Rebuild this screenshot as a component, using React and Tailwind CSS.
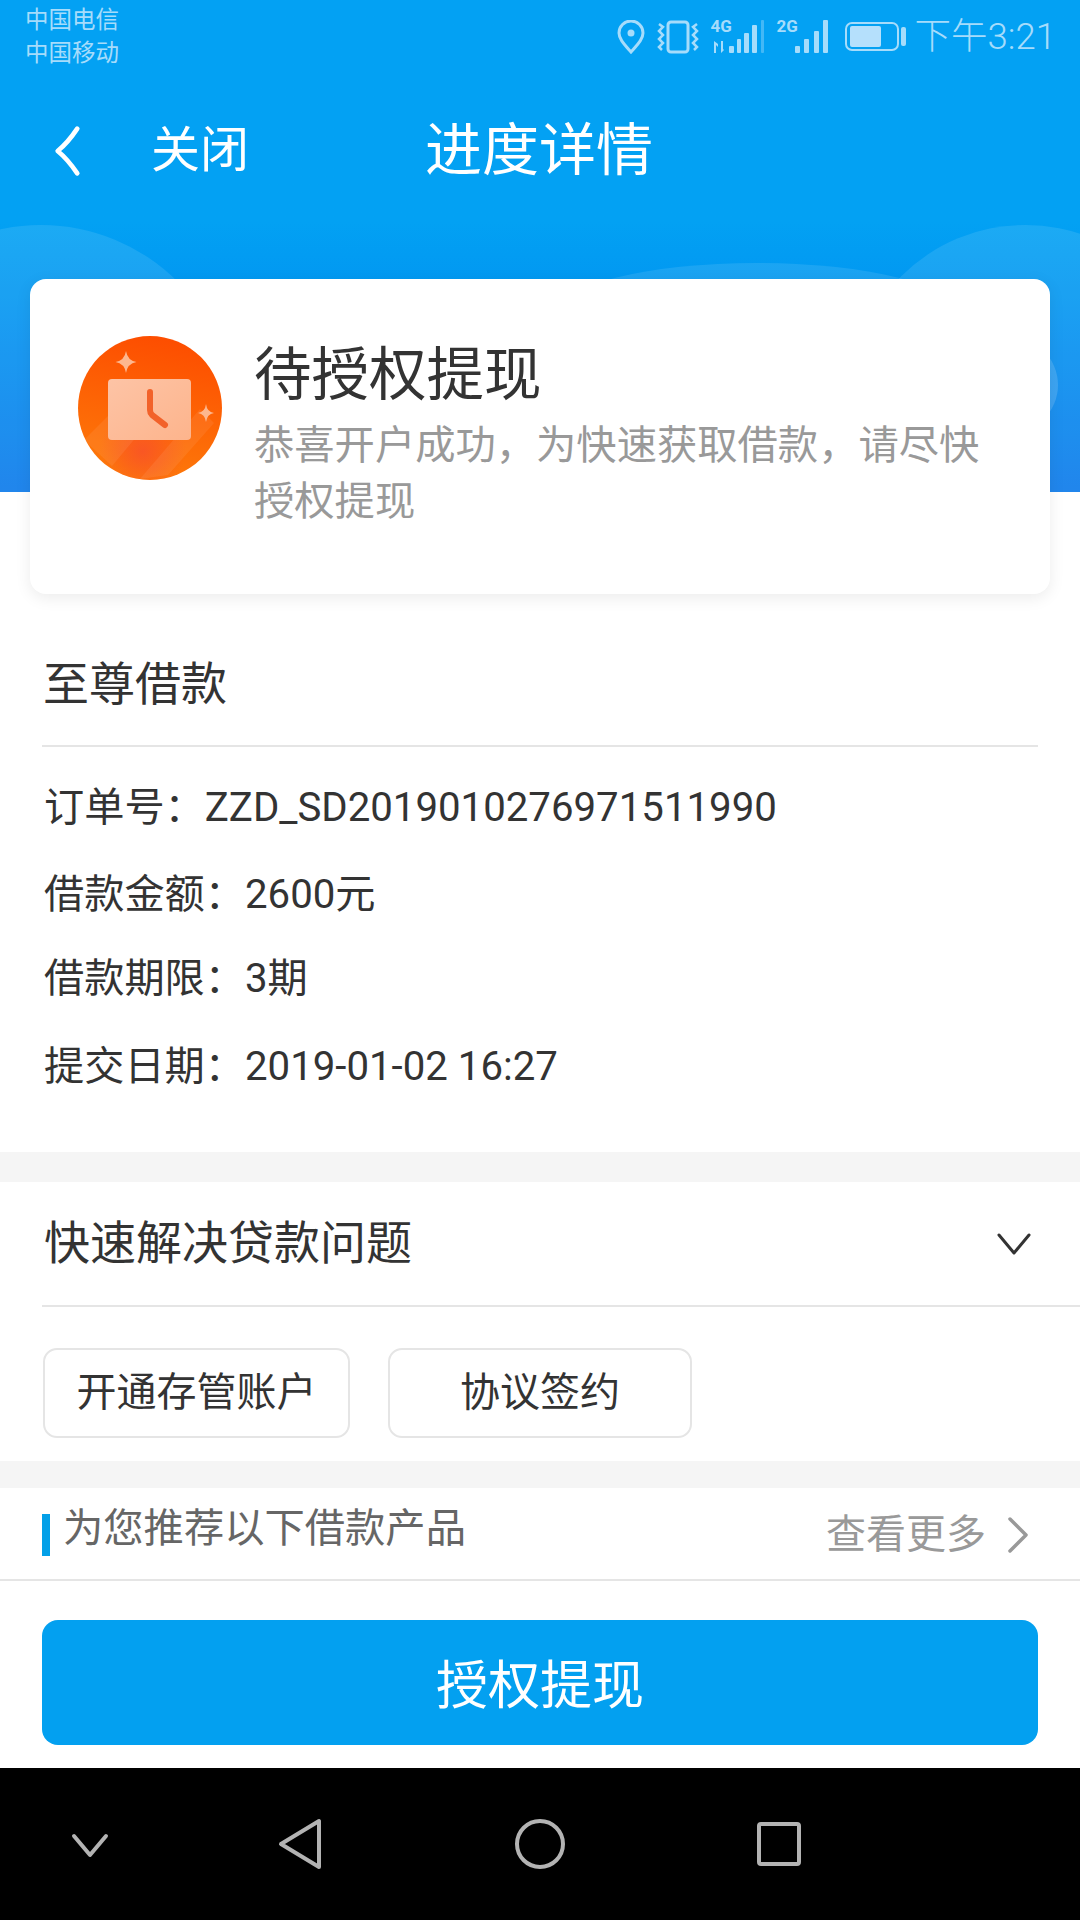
const statusBlue = '#a6dcfb'

function StatusIcons() {
  return (
    <div className="flex items-center">
      {/* location */}
      <svg width="28" height="34" viewBox="0 0 28 34" fill="none" stroke={statusBlue} strokeWidth="3">
        <path d="M14 32C7 24 2 19 2 13a12 12 0 0 1 24 0c0 6-5 11-12 19z" />
        <circle cx="14" cy="13" r="3.5" fill={statusBlue} stroke="none" />
      </svg>
      {/* vibrate */}
      <svg width="42" height="34" viewBox="0 0 42 34" fill="none" stroke={statusBlue} className="ml-[12px]">
        <rect x="11" y="2" width="20" height="30" rx="3" strokeWidth="3" />
        <path d="M2 4l4 3-4 4 4 4-4 4 4 4-4 4 3 3" strokeWidth="2.5" />
        <path d="M40 4l-4 3 4 4-4 4 4 4-4 4 4 4-3 3" strokeWidth="2.5" />
      </svg>
      {/* 4G signal */}
      <div className="relative w-[53px] h-[34px] ml-[12px]">
        <span className="absolute left-0 top-[-4px] text-[17px] leading-[20px] font-bold text-[#a6dcfb]">4G</span>
        <svg width="53" height="34" viewBox="0 0 53 34" fill={statusBlue}>
          <path d="M3 21v12h2V25l2 2v-3zM10 21v12l3-3-1-1v-8z" />
          <rect x="18" y="26" width="5" height="7" rx="1" />
          <rect x="26" y="19" width="4" height="14" rx="1" />
          <rect x="33" y="13" width="5" height="20" rx="1" />
          <rect x="41" y="5" width="5" height="28" rx="1" />
          <rect x="50" y="0" width="3" height="33" rx="1" opacity="0.4" />
        </svg>
      </div>
      {/* 2G signal */}
      <div className="relative w-[52px] h-[34px] ml-[13px]">
        <span className="absolute left-0 top-[-4px] text-[17px] leading-[20px] font-bold text-[#a6dcfb]">2G</span>
        <svg width="52" height="34" viewBox="0 0 52 34" fill={statusBlue}>
          <rect x="18" y="26" width="5" height="7" rx="1" />
          <rect x="27" y="19" width="5" height="14" rx="1" />
          <rect x="37" y="11" width="5" height="22" rx="1" />
          <rect x="46" y="0" width="5" height="33" rx="1" />
        </svg>
      </div>
      {/* battery */}
      <svg width="61" height="30" viewBox="0 0 61 30" fill="none" className="ml-[16px]">
        <rect x="1" y="1" width="52" height="27" rx="6" stroke={statusBlue} strokeWidth="2" />
        <rect x="5" y="4" width="31" height="21" rx="2" fill="#b5e0fc" />
        <rect x="56" y="5" width="5" height="19" rx="2" fill={statusBlue} />
      </svg>
    </div>
  )
}

function ClockBadge() {
  return (
    <svg width="144" height="144" viewBox="0 0 144 144" className="shrink-0">
      <defs>
        <linearGradient id="badge" x1="0.6" y1="0" x2="0.4" y2="1">
          <stop offset="0" stopColor="#fd4d00" />
          <stop offset="1" stopColor="#fd7a0a" />
        </linearGradient>
        <linearGradient id="face" x1="0" y1="0" x2="1" y2="1">
          <stop offset="0" stopColor="#fdc4a6" />
          <stop offset="1" stopColor="#fdb48c" />
        </linearGradient>
        <radialGradient id="glow" cx="0.45" cy="0.8" r="0.3">
          <stop offset="0" stopColor="#f8502a" stopOpacity="0.8" />
          <stop offset="1" stopColor="#f8502a" stopOpacity="0" />
        </radialGradient>
      </defs>
      <circle cx="72" cy="72" r="72" fill="url(#badge)" />
      <circle cx="72" cy="72" r="72" fill="url(#glow)" />
      <path d="M6 104L64 46l40 0-70 84zM62 143l60-70 14 14-46 52z" fill="#ffffff" opacity="0.07" />
      <rect x="30" y="43" width="83" height="61" rx="4" fill="url(#face)" />
      <path d="M72 56v18q0 3 2 5l13 10" stroke="#f2622a" strokeWidth="6" strokeLinecap="round" fill="none" />
      <path d="M48 15q1.500 9.500 10.500 11q-9 1.500-10.500 11q-1.500-9.500-10.500-11q9-1.500 10.500-11z" fill="#fdb78f" />
      <path d="M128 68q1 8 8 9q-7 1-8 9q-1-8-8-9q7-1 8-9z" fill="#fdb78f" />
    </svg>
  )
}

function InfoRow({ label, value, className }) {
  return (
    <p className={`text-[40.2px] leading-[48px] text-[#333333] ${className}`}>
      {label}：{value}
    </p>
  )
}

export default function App() {
  return (
    <div className="w-[1080px] h-[1920px] flex flex-col bg-white overflow-hidden font-['Roboto','Noto_Sans_CJK_SC',sans-serif]">
      {/* Header */}
      <div className="relative h-[492px] shrink-0 overflow-hidden bg-gradient-to-b from-[#03a1f3] from-[45%] to-[#0878ea]">
        <div className="absolute left-[-152px] top-[225px] w-[386px] h-[386px] rounded-full bg-white/10" />
        <div className="absolute left-[557px] top-[263px] w-[400px] h-[100px] rounded-[50%] bg-white/10" />
        <div className="absolute left-[850px] top-[225px] w-[350px] h-[350px] rounded-full bg-white/10" />
        <div className="absolute left-[962px] top-[337px] w-[96px] h-[96px] rounded-full bg-white/15" />

        <div className="relative flex justify-between pl-[25px] pr-[24px] h-[72px]">
          <div className="text-[23.500px] leading-[33px] pt-[4px] text-[#a6dcfb]">
            <div>中国电信</div>
            <div>中国移动</div>
          </div>
          <div className="flex items-center gap-[9px] pt-[2px]">
            <StatusIcons />
            <span className="text-[36.5px] font-light text-[#a6dcfb]">下午3:21</span>
          </div>
        </div>

        <div className="relative flex items-center h-[156px] pl-[53px] pt-[2px]">
          <svg width="28" height="54" viewBox="0 0 30 54" fill="none" stroke="#ffffff" strokeWidth="5" strokeLinecap="round" strokeLinejoin="round">
            <path d="M26 3Q16 18 5 27Q16 36 26 51" />
          </svg>
          <span className="ml-[70px] text-[49px] text-white">关闭</span>
          <span className="ml-[176px] text-[57px] text-white">进度详情</span>
        </div>
      </div>

      {/* Status card */}
      <div className="relative mt-[-213px] mx-[30px] h-[315px] bg-white rounded-[16px] shadow-[0_4px_16px_rgba(0,0,0,0.08)] flex items-start pl-[48px] pt-[57px]">
        <ClockBadge />
        <div className="ml-[32px] mt-[4px]">
          <div className="text-[57.5px] leading-[72px] text-[#333333]">待授权提现</div>
          <div className="w-[745px] mt-[6px] text-[40.3px] leading-[56px] text-[#999999]">恭喜开户成功，为快速获取借款，请尽快授权提现</div>
        </div>
      </div>

      {/* Order info */}
      <div className="mx-[42px] mt-[60px] h-[93px] border-b-2 border-[#e5e5e5]">
        <div className="pl-[1px] text-[46px] leading-[60px] text-[#333333]">至尊借款</div>
      </div>
      <div className="pl-[44px] pt-[37px] h-[405px]">
        <InfoRow label="订单号" value="ZZD_SD2019010276971511990" />
        <InfoRow label="借款金额" value="2600元" className="mt-[39px]" />
        <InfoRow label="借款期限" value="3期" className="mt-[36px]" />
        <InfoRow label="提交日期" value="2019-01-02 16:27" className="mt-[40px]" />
      </div>

      <div className="h-[30px] shrink-0 bg-[#f5f5f5]" />

      {/* Quick help */}
      <div className="ml-[42px] h-[125px] flex items-center justify-between border-b-2 border-[#e5e5e5] pr-[48px]">
        <span className="pl-[2px] text-[46px] text-[#333333]">快速解决贷款问题</span>
        <svg width="36" height="26" viewBox="0 0 36 26" fill="none" stroke="#333333" strokeWidth="3" strokeLinecap="round" strokeLinejoin="round">
          <path d="M3 4l15 18L33 4" />
        </svg>
      </div>
      <div className="h-[154px] pl-[43px] pt-[41px] flex gap-[38px]">
        <div className="w-[307px] h-[90px] rounded-[14px] border-2 border-[#e5e5e5] flex items-center justify-center text-[40px] text-[#333333]">开通存管账户</div>
        <div className="w-[304px] h-[90px] rounded-[14px] border-2 border-[#e5e5e5] flex items-center justify-center text-[40px] text-[#333333]">协议签约</div>
      </div>

      <div className="h-[27px] shrink-0 bg-[#f5f5f5]" />

      {/* Recommend */}
      <div className="h-[93px] pl-[42px] pr-[50px] flex items-center border-b-2 border-[#e5e5e5]">
        <div className="w-[8px] h-[42px] mt-[2px] bg-[#03a0e8]" />
        <span className="ml-[13px] mt-[-8px] text-[40.3px] text-[#666666]">为您推荐以下借款产品</span>
        <span className="ml-auto mt-[2px] text-[40px] text-[#999999]">查看更多</span>
        <svg width="24" height="38" viewBox="0 0 24 38" fill="none" stroke="#999999" strokeWidth="3.5" strokeLinecap="round" strokeLinejoin="round" className="ml-[20px] mt-[2px]">
          <path d="M4 3l16 16L4 35" />
        </svg>
      </div>

      {/* Action */}
      <div className="px-[42px] pt-[39px] h-[187px]">
        <button className="w-full h-[125px] pt-[8px] rounded-[16px] bg-[#03a0f0] text-white text-[52px]">授权提现</button>
      </div>

      {/* Android nav */}
      <div className="flex-1 bg-black flex items-center pl-[64px]">
        <svg width="52" height="52" viewBox="0 0 52 52" fill="none" stroke="#b3b3b3" strokeWidth="4" strokeLinejoin="round" strokeLinecap="round" className="mr-[160px]">
          <path d="M10 18l16 19 16-19" />
        </svg>
        <svg width="48" height="52" viewBox="0 0 48 52" fill="none" stroke="#b3b3b3" strokeWidth="4" strokeLinejoin="round" className="mr-[190px]">
          <path d="M43 3v46L5 26z" />
        </svg>
        <svg width="52" height="52" viewBox="0 0 52 52" fill="none" stroke="#b3b3b3" strokeWidth="4" className="mr-[190px]">
          <circle cx="26" cy="26" r="23" />
        </svg>
        <svg width="46" height="46" viewBox="0 0 46 46" fill="none" stroke="#b3b3b3" strokeWidth="4">
          <rect x="3" y="3" width="40" height="40" rx="2" />
        </svg>
      </div>
    </div>
  )
}
